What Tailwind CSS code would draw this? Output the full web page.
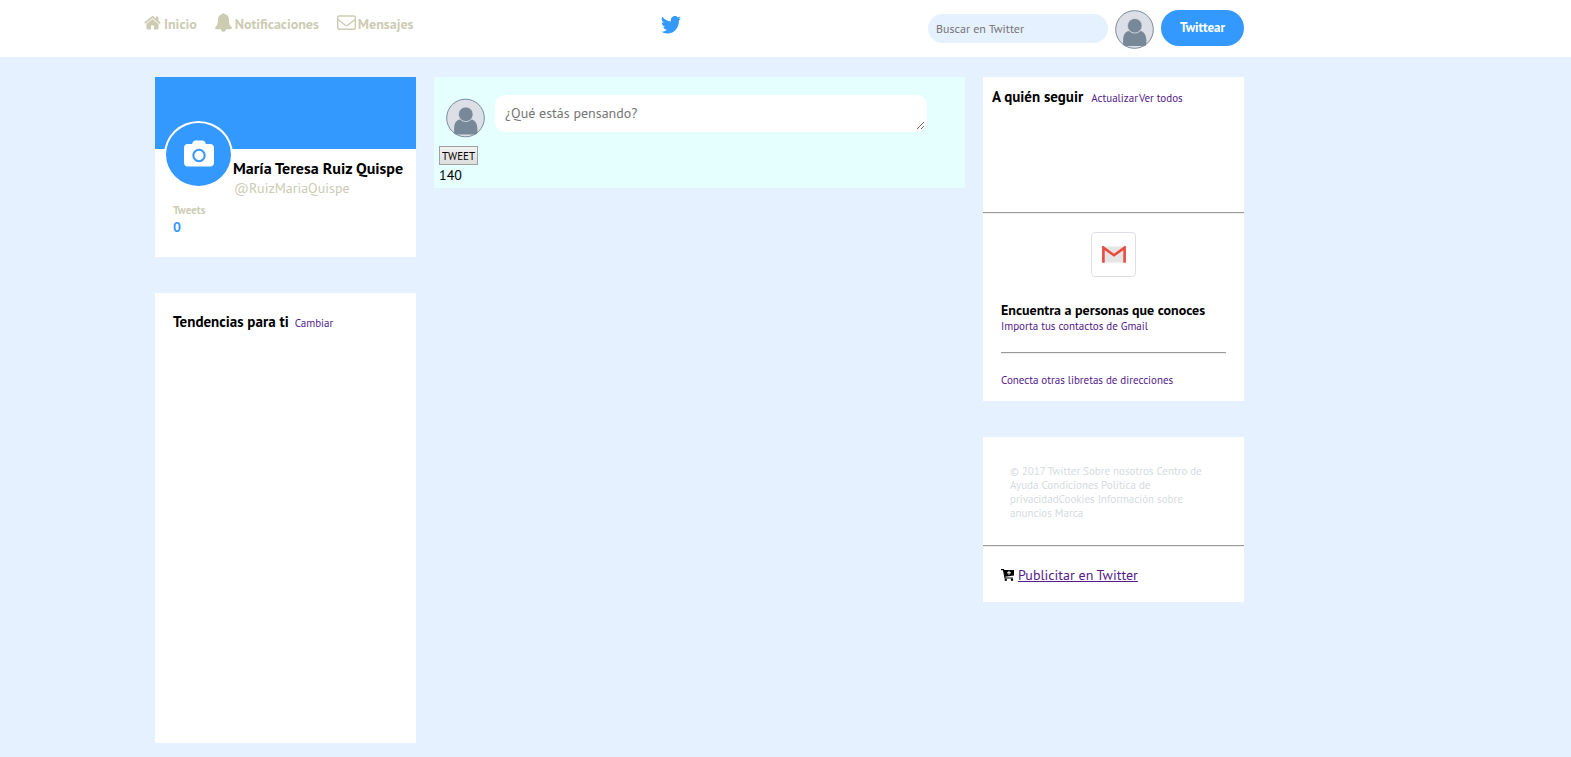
<!DOCTYPE html>
<html lang="es">
<head>
<meta charset="utf-8">
<meta name="viewport" content="width=device-width, initial-scale=1">
<title>Twitter</title>
<script src="https://cdn.jsdelivr.net/npm/@tailwindcss/browser@4"></script>
</head>
<body class="min-h-screen bg-[#e5f1ff] font-['PT_Sans','Lato',sans-serif] text-sm text-black">
<svg class="hidden">
  <symbol id="person" viewBox="0 0 40 40">
    <circle cx="20" cy="20" r="19.3" fill="#dcdfe5" stroke="#778899" stroke-width="1"/>
    <path d="M14.500 21.500C10 22 8.300 26 8.300 31.500V34.500Q8.300 37 10.800 37H29.700Q32.200 37 32.200 34.500V31.500C32.200 26 30 22 26 21.500Q20.300 25.500 14.500 21.500Z" fill="#778899"/>
    <circle cx="20.300" cy="16.200" r="7.500" fill="#778899" stroke="#dcdfe5" stroke-width=".8"/>
  </symbol>
</svg>

<header class="flex h-[57px] items-start justify-between bg-white pr-[327px] pl-36">
  <nav class="flex gap-[18px] pt-3 text-sm leading-6 font-bold text-[#ccccb3]">
    <a href="#" class="flex items-center gap-[3px]">
      <svg class="-mt-1 h-5 w-[17px]" viewBox="0 0 17 20" fill="currentColor"><path d="M8.500 7L14.500 12V16.500Q14.500 17.500 13.500 17.500H10V13.500H7V17.500H3.500Q2.500 17.500 2.500 16.500V12Z"/><path d="M.8 11.300L8.500 4.900L16.200 11.300" fill="none" stroke="currentColor" stroke-width="1.800"/><path d="M12 4.500H14.400V9.500L12 7.500Z"/></svg>Inicio</a>
    <a href="#" class="flex items-center gap-[3px]">
      <svg class="-mt-1 h-5 w-[17px]" viewBox="0 0 17 20" fill="currentColor"><path d="M7.500 2Q7.500 1 8.500 1Q9.500 1 9.500 2C12.700 2.500 14 5 14 8C14 12.500 15.300 14 17 15.500Q17 17.300 15.500 17.300H11A2.500 2.500 0 0 1 6 17.300H1.500Q0 17.300 0 15.500C1.700 14 3 12.500 3 8C3 5 4.300 2.500 7.500 2Z"/></svg>Notificaciones</a>
    <a href="#" class="flex items-center gap-[2px]">
      <svg class="-mt-1 h-5 w-[19px]" viewBox="0 0 19 20" fill="none" stroke="currentColor" stroke-width="1.400"><rect x=".7" y="4" width="17.600" height="13.300" rx="1.500"/><path d="M.9 7.500L8 13Q9.500 14.200 11 13L18.100 7.500"/></svg>Mensajes</a>
  </nav>
  <a href="#" aria-label="Twitter" class="pt-4">
    <svg class="h-[18px] w-5" viewBox="0 0 24 20" preserveAspectRatio="none" fill="#3399ff"><path d="M24 2.370a9.600 9.600 0 0 1-2.830.78A4.900 4.900 0 0 0 23.340.4a9.700 9.700 0 0 1-3.130 1.200 4.920 4.920 0 0 0-8.390 4.490A13.980 13.980 0 0 1 1.670.92a4.930 4.930 0 0 0 1.520 6.570 4.900 4.900 0 0 1-2.230-.61v.06a4.930 4.930 0 0 0 3.950 4.830 4.900 4.900 0 0 1-2.220.08 4.930 4.930 0 0 0 4.600 3.420A9.900 9.900 0 0 1 0 17.310a13.940 13.940 0 0 0 7.550 2.210c9.050 0 14-7.500 14-13.990 0-.21 0-.42-.02-.63A9.900 9.900 0 0 0 24 2.370Z"/></svg>
  </a>
  <form class="flex items-start gap-[7px] pt-[10px]">
    <input type="search" aria-label="Buscar en Twitter" placeholder="Buscar en Twitter" class="mt-1 h-[29px] w-[180px] rounded-full bg-[#e5f1ff] px-2 text-xs placeholder:text-[#757575]">
    <svg class="h-[39px] w-[39px]"><use href="#person"/></svg>
    <button type="button" class="h-9 w-[83px] rounded-full bg-[#3399ff] pt-px text-[13px] font-bold text-white">Twittear</button>
  </form>
</header>

<main class="grid grid-cols-[29fr_59fr_29fr] items-start gap-x-[18px] pt-5 pr-[327px] pb-[14px] pl-[155px]">
  <div class="flex flex-col gap-9">
    <section class="h-[180px] bg-white">
      <div class="h-[72px] bg-[#3399ff]"></div>
      <div class="-mt-7 flex pl-[9px]">
        <div class="flex h-[67px] w-[69px] shrink-0 items-center justify-center rounded-[50%] border-2 border-white bg-[#3399ff] pb-[2px]">
          <svg class="h-[27px] w-[30px]" viewBox="0 0 30 27"><path d="M8 4Q9 .5 11.500 .5H18.500Q21 .5 22 4H26Q30 4 30 8V22.500Q30 26.500 26 26.500H4Q0 26.500 0 22.500V8Q0 4 4 4Z" fill="#fff"/><circle cx="15" cy="15.500" r="5.700" fill="none" stroke="#3399ff" stroke-width="2"/></svg>
        </div>
        <div class="pt-[37px] whitespace-nowrap">
          <h1 class="text-base leading-5 font-bold">María Teresa Ruiz Quispe</h1>
          <p class="pl-px leading-5 text-[#ccccb3]">@RuizMariaQuispe</p>
        </div>
      </div>
      <div class="pt-1 pl-[18px] font-bold">
        <p class="text-[11px] leading-4 text-[#ccccb3]">Tweets</p>
        <p class="leading-[18px] text-[#3399ff]">0</p>
      </div>
    </section>
    <section class="flex h-[450px] items-baseline gap-[6px] bg-white px-[18px] pt-[19px]">
      <h2 class="text-[15px] leading-5 font-bold">Tendencias para ti</h2>
      <a href="#" class="text-[11px] text-[#551a8b]">Cambiar</a>
    </section>
  </div>

  <section class="h-[111px] bg-[#e5ffff] pt-[18px] pl-[5px]">
    <div class="flex h-[51px] items-start gap-[10px] pr-[38px] pl-[7px]">
      <svg class="mt-[3px] h-10 w-[39px] shrink-0"><use href="#person"/></svg>
      <textarea aria-label="¿Qué estás pensando?" placeholder="¿Qué estás pensando?" class="h-[37px] flex-1 resize rounded-[10px] border-2 border-white bg-white px-2 py-[6px] text-sm placeholder:text-[#757575]"></textarea>
    </div>
    <button type="button" class="block h-[19px] w-[39px] border border-[#a0a0a0] bg-linear-to-b from-[#f2f2f2] to-[#dddddd] text-[11px] leading-4">TWEET</button>
    <p class="leading-5">140</p>
  </section>

  <div class="flex flex-col gap-9">
    <section class="h-[324px] bg-white">
      <div class="flex h-[135px] items-baseline pt-[10px] pl-[9px]">
        <h2 class="mr-2 text-[15px] leading-5 font-bold">A quién seguir</h2>
        <a href="#" class="mr-px text-[11px] text-[#551a8b]">Actualizar</a>
        <a href="#" class="text-[11px] text-[#551a8b]">Ver todos</a>
      </div>
      <hr class="h-[2px] border-t border-b border-t-[#9a9a9a] border-b-[#eeeeee]">
      <div class="px-[18px] pt-[18px]">
        <div class="mx-auto flex size-[45px] items-center justify-center rounded border border-[#dcdfe5]">
          <svg class="h-[17px] w-6" viewBox="0 0 24 17"><path d="M1 .5H23V16.500H1Z" fill="#e5e5e5"/><path d="M1.400 16.800V1.600L12 9.200L22.600 1.600V16.800" fill="none" stroke="#ea4b3c" stroke-width="2.600"/></svg>
        </div>
        <h2 class="pt-6 text-sm leading-[18px] font-bold whitespace-nowrap">Encuentra a personas que conoces</h2>
        <a href="#" class="block text-[11px] leading-[14px] text-[#551a8b]">Importa tus contactos de Gmail</a>
        <hr class="mt-[19px] mb-[19px] h-[2px] border-t border-b border-t-[#9a9a9a] border-b-[#eeeeee]">
        <a href="#" class="block text-[11px] leading-[14px] text-[#551a8b]">Conecta otras libretas de direcciones</a>
      </div>
    </section>
    <section class="h-[165px] bg-white">
      <p class="h-[108px] px-[27px] pt-[27px] text-[11px] leading-[14px] text-[#d5dbe0]">© 2017 Twitter Sobre nosotros Centro de<br>Ayuda Condiciones Política de<br>privacidadCookies Información sobre<br>anuncios Marca</p>
      <hr class="h-[2px] border-t border-b border-t-[#9a9a9a] border-b-[#eeeeee]">
      <div class="flex items-center gap-1 pt-[18px] pl-[18px]">
        <svg class="h-3 w-[13px]" viewBox="0 0 13 12"><path d="M0 .6H2.500L4 9H12" fill="none" stroke="#000" stroke-width="1.200"/><path d="M2.500 1H13V6.500L4 7.800Z"/><path d="M8 1.800V5.800M6 3.800H10" stroke="#fff"/><circle cx="4.800" cy="10.700" r="1.200"/><circle cx="11" cy="10.700" r="1.200"/></svg>
        <a href="#" class="text-sm leading-5 text-[#551a8b] underline">Publicitar en Twitter</a>
      </div>
    </section>
  </div>
</main>
</body>
</html>
